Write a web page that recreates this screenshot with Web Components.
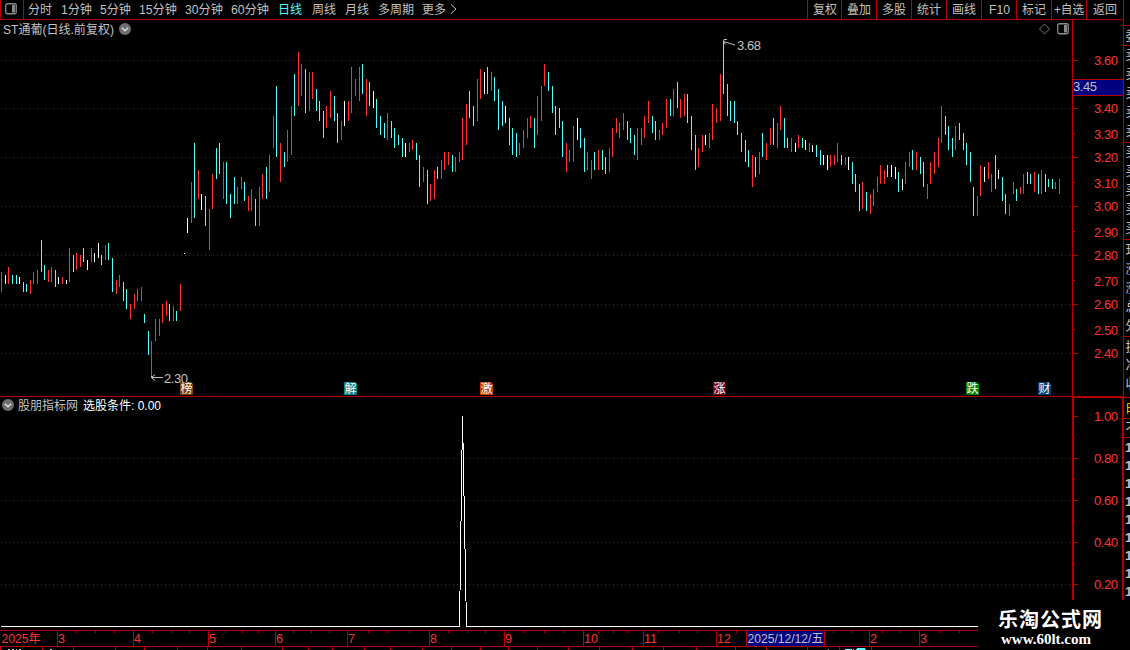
<!DOCTYPE html>
<html lang="zh-CN">
<head>
<meta charset="utf-8">
<title>ST通葡 日线</title>
<style>
    html, body {
        margin: 0;
        height: 650px;
        background: #000;
        overflow: hidden;
    }

    body {
        width: 1130px;
        color: #c0c0c0;
        font: 12px/16px "Liberation Sans", "Noto Sans CJK SC", sans-serif;
        --line: #b40000;
        --up: #ff3232;
        --down: #54fcfc;
    }
</style>
</head>
<body>
<stock-app></stock-app>

<script>
const SVG_FONT = `
    svg { display: block; }
    text { font: 13px "Liberation Sans", "Noto Sans CJK SC", sans-serif; }
    .crisp { shape-rendering: crispEdges; }
`;

// x top bottom colour (r = up, c = down, w = flat)
const BARS = `
1 272 292 r,5 275 284 w,8 267 284 r,12 275 284 c,16 275 284 c,19 277 284 w,23 282 292 c,26 284 292 c,
30 280 294 r,33 272 284 r,37 270 284 r,41 240 272 c,44 265 280 c,48 270 282 r,51 267 282 r,55 270 287 c,
58 277 284 w,62 277 284 r,66 280 284 w,69 248 282 r,73 255 272 c,76 253 270 r,80 255 267 r,83 248 262 c,
87 260 270 w,91 248 262 r,94 253 262 w,98 243 258 w,101 255 265 c,105 245 260 r,108 243 260 c,112 258 292 c,
116 280 294 r,119 275 287 r,123 282 301 c,126 289 309 c,130 304 319 r,134 294 309 r,137 289 301 r,141 287 301 r,
144 314 323 c,148 331 355 c,151 341 376 r,155 319 341 r,159 319 336 r,162 304 323 r,166 301 316 r,169 304 321 c,
173 306 321 r,176 311 321 c,180 284 311 r,184 253 254 w,187 218 233 w,191 182 223 r,194 143 218 c,198 170 199 r,
201 194 210 w,205 196 226 c,209 209 250 r,212 174 209 r,216 148 179 c,219 143 174 c,223 162 199 r,226 162 204 c,
230 194 218 c,234 177 204 c,237 187 204 r,241 177 189 r,244 182 201 c,248 196 211 r,251 189 211 r,255 199 226 c,
259 187 226 r,262 174 199 r,266 167 199 c,269 155 192 r,273 116 148 r,276 86 157 c,280 143 182 r,284 152 167 c,
287 130 162 r,291 106 155 r,294 74 116 c,298 52 106 r,301 64 96 r,305 69 113 c,309 72 111 r,312 72 99 r,
316 89 111 c,319 101 121 c,323 111 138 c,326 106 128 r,330 91 118 r,334 96 121 c,337 113 143 c,341 121 140 r,
344 101 126 w,348 101 121 r,351 67 113 r,355 79 96 r,359 67 101 r,362 64 94 c,366 79 116 r,369 82 106 c,
373 91 108 w,376 99 128 c,380 116 135 c,384 123 138 c,387 113 140 r,391 121 138 c,394 128 148 c,398 135 145 c,
402 138 157 c,405 143 157 w,409 143 152 r,412 140 150 r,416 143 160 c,419 155 187 c,423 167 182 r,427 170 204 c,
430 184 201 r,434 170 199 r,437 167 179 c,441 160 179 r,444 152 170 r,448 152 165 r,452 155 172 c,455 157 172 r,
459 152 162 r,462 118 160 r,466 104 145 r,469 91 118 c,473 106 126 c,477 79 121 r,480 69 99 r,484 72 94 w,
487 67 94 c,491 72 91 r,494 77 101 c,498 89 130 c,502 101 126 c,505 106 123 w,509 118 145 c,512 128 155 c,
516 133 157 c,519 143 155 r,523 130 148 r,527 118 138 r,530 116 128 r,534 118 148 c,537 96 135 r,541 86 121 r,
544 64 86 r,548 72 91 c,552 86 113 c,555 106 135 c,559 108 128 c,562 121 157 c,566 143 172 r,569 150 162 r,
573 126 162 r,577 118 140 w,580 128 148 c,584 138 172 c,587 152 170 r,591 160 179 r,594 152 170 c,598 150 170 r,
602 150 170 c,605 157 174 c,609 148 172 r,612 128 157 r,616 118 133 r,619 123 138 r,623 113 130 r,627 121 140 c,
630 128 143 c,634 135 155 c,637 128 160 r,641 128 145 r,644 116 138 r,648 101 123 r,652 116 133 c,655 121 140 c,
659 130 140 r,662 123 135 r,666 99 128 r,670 99 116 c,673 89 116 r,677 82 108 c,680 99 118 r,684 94 116 r,
687 94 123 c,691 116 150 c,695 135 170 c,698 148 167 r,702 135 152 r,705 135 145 w,709 133 148 r,712 104 140 r,
716 108 123 r,720 74 121 r,723 41 94 c,727 84 116 c,730 101 121 c,734 101 123 c,737 121 135 c,741 133 152 c,
745 140 162 c,748 150 167 c,752 155 187 r,755 157 177 c,759 152 174 r,762 133 157 c,766 143 160 r,770 128 145 r,
773 118 145 c,777 123 148 r,780 106 130 r,784 118 148 c,787 138 148 c,791 138 152 r,795 143 152 w,798 135 148 r,
802 138 148 c,805 140 150 w,809 143 152 r,812 145 152 w,816 145 157 c,820 150 165 c,823 155 165 w,827 155 170 w,
830 155 167 r,834 155 165 r,837 143 162 r,841 155 165 c,845 157 165 r,848 157 170 w,852 162 184 c,855 174 192 c,
859 184 211 c,862 182 209 r,866 192 211 c,870 194 214 r,873 189 206 r,877 177 192 r,880 165 184 r,884 170 184 r,
887 165 177 c,891 165 177 w,895 167 179 w,898 172 192 c,902 179 190 w,905 162 184 r,909 152 167 r,912 150 170 c,
916 152 170 r,920 157 174 c,923 162 187 c,927 184 199 r,930 162 184 r,934 152 174 r,938 138 167 r,941 106 143 r,
945 116 135 c,948 126 150 c,952 138 157 c,955 126 150 r,959 123 140 c,963 133 150 c,966 143 165 c,970 152 182 c,
973 187 216 c,977 196 216 r,980 165 196 r,984 167 182 w,988 162 179 r,991 174 192 r,995 155 189 c,998 170 179 w,
1002 177 201 c,1005 194 214 c,1009 204 216 r,1013 182 194 r,1016 189 201 c,1020 187 194 r,1023 174 194 r,
1027 172 184 c,1030 174 184 c,1034 172 192 r,1038 174 194 c,1041 170 194 r,1045 174 192 c,1048 179 187 c,
1052 179 189 c,1055 182 189 r,1059 179 194 r`;

const COLORS = { r: 'var(--up)', c: 'var(--down)', w: '#fff' };

function barPaths() {
    const d = { r: '', c: '', w: '' };
    BARS.split(',').forEach(b => {
        const [x, y1, y2, k] = b.trim().split(' ');
        d[k] += `M${+x + 0.5} ${y1}V${y2}`;
    });
    return Object.keys(d).map(k => `<path d="${d[k]}" stroke="${COLORS[k]}"/>`).join('');
}

function gridLines(rows) {
    const d = rows.map(y => `M1 ${y + 0.5}H1072`).join('');
    return `<path d="${d}" stroke="#aa0000" stroke-dasharray="1 3"/>`;
}

class StockApp extends HTMLElement {
    constructor() {
        super();
        this.attachShadow({mode: 'open'}).innerHTML = `
            <style>
                :host {
                    display: grid;
                    grid-template: 20px 376px 234px 20px / 1072px 51px 7px;
                    width: 1130px;
                    height: 650px;
                    overflow: hidden;
                    position: relative;
                }
                tool-bar { grid-area: 1 / 1 / 2 / 3; }
                time-axis { grid-area: 4 / 1 / 5 / 4; }
                quote-strip { grid-area: 1 / 3 / 4 / 4; }
                .name { margin-left: 3px; }
                .white { color: #fff; margin-left: 1px; }
                .end { margin-left: auto; padding-right: 3px; display: flex; gap: 7px; }
                site-mark { position: absolute; right: 0; bottom: 0; }
            </style>
            <tool-bar></tool-bar>
            <chart-panel>
                <span slot="title" class="name"><fit-text w="111">ST通葡(日线.前复权)</fit-text></span>
                <round-arrow slot="title"></round-arrow>
                <span slot="title" class="end">
                    <svg width="11" height="12"><path d="M5.5 1 10.5 6l-5 5-5-5z" fill="none" stroke="#777"/></svg>
                    <panel-icon></panel-icon>
                </span>
                <candle-chart></candle-chart>
            </chart-panel>
            <value-axis kind="price"></value-axis>
            <chart-panel lower>
                <round-arrow slot="title"></round-arrow>
                <span slot="title"><fit-text w="60">股朋指标网</fit-text></span>
                <span slot="title" class="white"><fit-text w="78">选股条件: 0.00</fit-text></span>
                <signal-chart></signal-chart>
            </chart-panel>
            <value-axis kind="signal"></value-axis>
            <quote-strip></quote-strip>
            <time-axis></time-axis>
            <site-mark></site-mark>
        `;
    }
}

// one line of text squeezed or stretched to a fixed width
class FitText extends HTMLElement {
    connectedCallback() {
        const w = this.getAttribute('w');
        this.attachShadow({mode: 'open'}).innerHTML = `
            <style>
                :host { display: block; width: ${w}px; height: 16px; }
                svg { display: block; overflow: visible; }
                text { font: 12.5px "Liberation Sans", "Noto Sans CJK SC", sans-serif; fill: currentColor; }
            </style>
            <svg width="${w}" height="16"><text x="0" y="12.5" textLength="${w}" lengthAdjust="spacingAndGlyphs">${this.textContent}</text></svg>
        `;
    }
}

class PanelIcon extends HTMLElement {
    constructor() {
        super();
        this.attachShadow({mode: 'open'}).innerHTML = `
            <style>:host { display: block; width: 12px; height: 12px; } svg { display: block; }</style>
            <svg width="12" height="12">
                <rect x="0.75" y="0.75" width="10.5" height="10" rx="1.5" fill="none" stroke="#8a8a8a" stroke-width="1.3"/>
                <rect x="7" y="2" width="3" height="7.5" fill="#8a8a8a"/>
            </svg>
        `;
    }
}

class RoundArrow extends HTMLElement {
    constructor() {
        super();
        this.attachShadow({mode: 'open'}).innerHTML = `
            <style>:host { display: block; width: 12px; height: 12px; } svg { display: block; }</style>
            <svg width="12" height="12">
                <circle cx="6" cy="6" r="6" fill="#6e6e6e"/>
                <path d="M2.8 4.8 6 7.8l3.2-3" fill="none" stroke="#ddd" stroke-width="1.4"/>
            </svg>
        `;
    }
}

class ToolBar extends HTMLElement {
    constructor() {
        super();
        // label, cell width, text width
        const periods = [
            ['分时', 33, 24], ['1分钟', 39, 31], ['5分钟', 39, 31], ['15分钟', 46, 38],
            ['30分钟', 46, 38], ['60分钟', 47, 38], ['日线', 34, 24], ['周线', 33, 24],
            ['月线', 33, 24], ['多周期', 44, 36], ['更多', 28, 24]
        ];
        const actions = [
            ['复权', 34, 24], ['叠加', 35, 24], ['多股', 35, 24], ['统计', 35, 24], ['画线', 35, 24],
            ['F10', 35, 21], ['标记', 35, 24], ['+自选', 35, 30], ['返回', 37, 24]
        ];
        this.attachShadow({mode: 'open'}).innerHTML = `
            <style>
                :host {
                    display: flex;
                    box-sizing: border-box;
                    height: 20px;
                    border-bottom: 1px solid var(--line);
                }
                .icon {
                    box-sizing: border-box;
                    width: 24px;
                    padding: 3px 0 0 4px;
                    border: solid var(--line);
                    border-width: 0 1px;
                }
                .periods { display: flex; padding: 1px 0 0 4px; }
                .periods .on { color: var(--down); }
                .actions { display: flex; margin-left: auto; }
                .actions > div {
                    box-sizing: border-box;
                    display: flex;
                    justify-content: center;
                    padding-top: 1px;
                    border-left: 1px solid var(--line);
                }
            </style>
            <div class="icon"><panel-icon></panel-icon></div>
            <div class="periods">
                ${periods.map(([t, c, w]) => `<div class="${t === '日线' ? 'on' : ''}" style="width:${c}px"><fit-text w="${w}">${t}</fit-text></div>`).join('')}
                <svg width="8" height="16"><path d="M1 3.5l5 4.5-5 4.5" fill="none" stroke="#c0c0c0"/></svg>
            </div>
            <div class="actions">
                ${actions.map(([t, c, w]) => `<div style="width:${c}px"><fit-text w="${w}">${t}</fit-text></div>`).join('')}
            </div>
        `;
    }
}

class ChartPanel extends HTMLElement {
    constructor() {
        super();
        this.attachShadow({mode: 'open'}).innerHTML = `
            <style>
                :host { display: grid; grid-template: 1fr / 1fr; min-height: 0; }
                header, ::slotted(:not([slot])) { grid-area: 1 / 1; }
                header {
                    z-index: 1;
                    display: flex;
                    align-items: center;
                    align-self: start;
                    gap: 5px;
                    height: 18px;
                }
                :host([lower]) header { padding-left: 2px; gap: 4px; }
            </style>
            <header><slot name="title"></slot></header>
            <slot></slot>
        `;
    }
}

class CandleChart extends HTMLElement {
    constructor() {
        super();
        const badges = [
            [180, '榜', '#804000'], [344, '解', '#008080'], [480, '激', '#c04000'],
            [713, '涨', '#800000'], [966, '跌', '#008000'], [1038, '财', '#003c78']
        ];
        this.attachShadow({mode: 'open'}).innerHTML = `
            <style>
                :host { display: block; }
                ${SVG_FONT}
                .badge { font-size: 12px; fill: #fff; }
            </style>
            <svg width="1072" height="376" viewBox="0 20 1072 376">
                <g class="crisp" fill="none">
                    ${gridLines([60, 108, 157, 206, 255, 304, 353])}
                    ${barPaths()}
                </g>
                <path d="M151 377.5H163M155 374.5l-3.5 3 3.5 3" fill="none" stroke="#c0c0c0"/>
                <path d="M151 376h2v2h-2z" fill="#c0c0c0"/>
                <text x="164" y="383" textLength="24" fill="#c0c0c0">2.30</text>
                <path d="M723.5 41.5 735 45M727 39.5h-3l-.5 2 2 3" fill="none" stroke="#c0c0c0"/>
                <text x="737" y="50" textLength="24" fill="#c0c0c0">3.68</text>
                ${badges.map(([x, t, c]) => `
                    <path d="M${x} 382h11l2 2v11h-13z" fill="${c}"/>
                    <text class="badge" x="${x + 0.5}" y="393">${t}</text>`).join('')}
            </svg>
        `;
    }
}

class SignalChart extends HTMLElement {
    constructor() {
        super();
        this.attachShadow({mode: 'open'}).innerHTML = `
            <style>:host { display: block; } ${SVG_FONT}</style>
            <svg class="crisp" width="1072" height="234" viewBox="0 396 1072 234" fill="none">
                <path d="M0 396.5H1072" stroke="var(--line)"/>
                ${gridLines([458, 500, 542, 584])}
                <path d="M1 626.5H459.5L462.5 416L466.5 626.5H1072" stroke="#fff"/>
            </svg>
        `;
    }
}

class ValueAxis extends HTMLElement {
    connectedCallback() {
        const price = this.getAttribute('kind') === 'price';
        const top = price ? 20 : 396;
        const h = price ? 376 : 234;
        // label text and baseline
        const labels = price
            ? [['3.60', 65], ['3.40', 113], ['3.30', 139], ['3.20', 162], ['3.10', 188], ['3.00', 211], ['2.90', 237],
               ['2.80', 260], ['2.70', 286], ['2.60', 309], ['2.50', 335], ['2.40', 358]]
            : [['1.00', 421], ['0.80', 463], ['0.60', 505], ['0.40', 547], ['0.20', 589]];
        const major = price ? [60, 108, 157, 206, 255, 304, 353] : [416, 458, 500, 542, 584];
        const minor = price ? [133, 182, 231, 280, 329] : [437, 479, 521, 563];
        this.attachShadow({mode: 'open'}).innerHTML = `
            <style>
                :host { display: block; }
                ${SVG_FONT}
                svg { overflow: visible; }
            </style>
            <svg width="51" height="${h}" viewBox="1072 ${top} 51 ${h}">
                <g class="crisp" fill="none" stroke="var(--line)">
                    ${price ? '<path d="M1072.5 20V396"/>' : '<path d="M1073 630V397H1123V630" stroke-width="2"/>'}
                    <path d="${major.map(y => `M1073 ${y + 0.5}h5`).join('')}${minor.map(y => `M1073 ${y + 0.5}h2`).join('')}"/>
                    ${price ? '<path d="M1073 79.5H1123V95.5H1073" fill="#000080"/>' : ''}
                </g>
                <g fill="var(--up)">
                    ${labels.map(([t, y]) => `<text x="1094" y="${y}" textLength="24">${t}</text>`).join('')}
                </g>
                ${price ? '<text x="1073" y="91" textLength="24" fill="#c0c0c0">3.45</text>' : ''}
            </svg>
        `;
    }
}

// left edge of the quote table, the rest runs off the window
class QuoteStrip extends HTMLElement {
    constructor() {
        super();
        const rows = [['委', 40], ['卖', 59], ['卖', 78], ['卖', 97], ['卖', 116], ['卖', 135], ['买', 156], ['买', 175],
            ['买', 194], ['买', 213], ['买', 232], ['现', 254], ['涨', 273], ['涨', 292], ['总', 311], ['外', 330],
            ['换', 351], ['净', 369], ['收', 388], ['不', 432]];
        const ones = [452, 470, 488, 506, 524, 542, 560, 578, 596];
        this.attachShadow({mode: 'open'}).innerHTML = `
            <style>:host { display: block; overflow: hidden; } ${SVG_FONT}</style>
            <svg width="7" height="630" viewBox="1123 0 7 630">
                <path class="crisp" d="M1123.5 0V630M1123 25.5h7M1123 45.5h7M1123 142.5h7M1123 239.5h7M1123 336.5h7M1123 397.5h7M1123 418.5h7M1123 437.5h7" stroke="var(--line)"/>
                <g fill="#c0c0c0">
                    ${rows.map(([t, y]) => `<text x="1125.5" y="${y}">${t}</text>`).join('')}
                    ${ones.map(y => `<text x="1125" y="${y}" style="font-weight:bold">1</text>`).join('')}
                </g>
                <text x="1126" y="413" fill="#e0e000">时</text>
            </svg>
        `;
    }
}

class TimeAxis extends HTMLElement {
    constructor() {
        super();
        const months = [[57, '3'], [133, '4'], [208, '5'], [275, '6'], [347, '7'], [429, '8'], [504, '9'],
            [583, '10'], [643, '11'], [716, '12'], [869, '2'], [919, '3']];
        const weeks = [76, 95, 114, 152, 171, 189, 225, 242, 258, 293, 311, 329, 368, 388, 409, 448, 467, 485, 524, 544,
            563, 598, 613, 628, 658, 679, 697, 736, 833, 851, 882, 899, 940, 959];
        const tabs = [0, 42, 73, 115, 144, 177, 207, 241, 282, 308, 332, 364, 390, 422, 451, 480, 508, 537, 568, 599,
            632, 663, 696, 735, 766, 807, 839, 871];
        this.attachShadow({mode: 'open'}).innerHTML = `
            <style>:host { display: block; } ${SVG_FONT} text { font-size: 12.5px; }</style>
            <svg width="1130" height="20" viewBox="0 630 1130 20">
                <g class="crisp" fill="none" stroke="var(--line)">
                    <path d="M0 630.5H1130M0 646.5H1130"/>
                    <path d="${months.map(m => `M${m[0] + 0.5} 631v15`).join('')}${weeks.map(x => `M${x + 0.5} 631v2`).join('')}${tabs.map(x => `M${x + 0.5} 647v3`).join('')}"/>
                    <rect x="746.5" y="630.5" width="78" height="16" fill="#000080"/>
                    <path d="M8 649.5h2m2 0h2m2 0h1m2 0h2M50 649.5h2M828 649.5h1" stroke="#c0c0c0"/>
                    <path d="M845 649.5h7m1 0h1m2 0h10M857 648.5h8" stroke="var(--down)"/>
                </g>
                <text x="1.5" y="643" textLength="39" lengthAdjust="spacingAndGlyphs" fill="var(--up)">2025年</text>
                <g fill="var(--up)">
                    ${months.map(([x, t]) => `<text x="${x + 1}" y="643">${t}</text>`).join('')}
                </g>
                <text x="747.5" y="642.5" textLength="76" lengthAdjust="spacingAndGlyphs" fill="#c0c0c0">2025/12/12/五</text>
            </svg>
        `;
    }
}

class SiteMark extends HTMLElement {
    constructor() {
        super();
        this.attachShadow({mode: 'open'}).innerHTML = `
            <style>
                :host { display: block; width: 152px; height: 50px; background: #000; }
                svg { display: block; }
                text { fill: #fff; }
                .cn { font: bold 20px "Noto Sans CJK SC", sans-serif; }
                .en { font: bold 15px "Liberation Serif", serif; }
            </style>
            <svg width="152" height="50">
                <text class="cn" x="20" y="26.5" textLength="104">乐淘公式网</text>
                <text class="en" x="23" y="44" textLength="90" lengthAdjust="spacingAndGlyphs">www.60lt.com</text>
            </svg>
        `;
    }
}

window.customElements.define('fit-text', FitText);
window.customElements.define('panel-icon', PanelIcon);
window.customElements.define('round-arrow', RoundArrow);
window.customElements.define('tool-bar', ToolBar);
window.customElements.define('chart-panel', ChartPanel);
window.customElements.define('candle-chart', CandleChart);
window.customElements.define('signal-chart', SignalChart);
window.customElements.define('value-axis', ValueAxis);
window.customElements.define('quote-strip', QuoteStrip);
window.customElements.define('time-axis', TimeAxis);
window.customElements.define('site-mark', SiteMark);
window.customElements.define('stock-app', StockApp);
</script>
</body>
</html>
